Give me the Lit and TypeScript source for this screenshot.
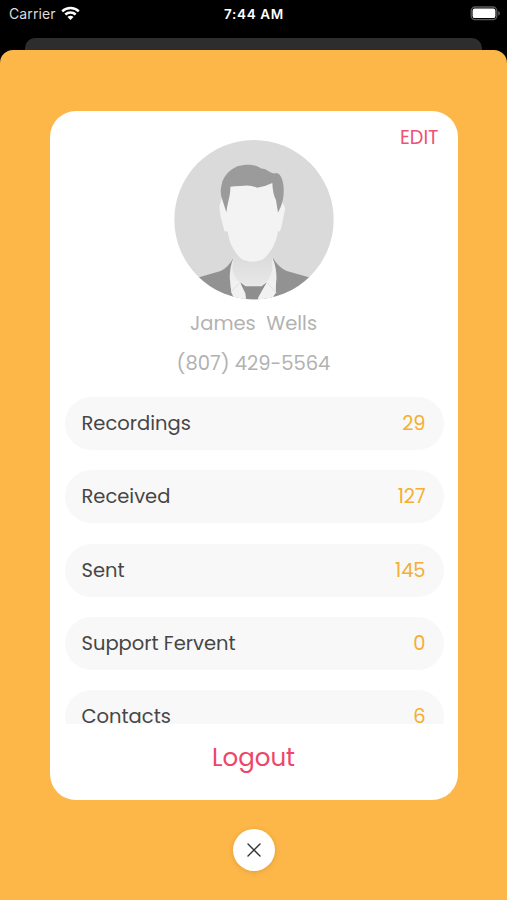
import { LitElement, html, css } from "lit";
import { customElement, property } from "lit/decorators.js";

const FONT = css`"Poppins", "Inter", "Liberation Sans", sans-serif`;

@customElement("status-bar")
class StatusBar extends LitElement {
  static styles = css`
    :host {
      display: grid;
      grid-template-columns: 1fr auto 1fr;
      align-items: center;
      height: 27px;
      padding: 0 6px 0 9px;
      box-sizing: border-box;
      color: #fff;
      font-family: "Inter", sans-serif;
      font-size: 14px;
    }
    .left { display: flex; align-items: center; gap: 5px; color: #dcdcdc; }
    .carrier { letter-spacing: 0.12px; }
    .time { font-weight: 600; font-size: 13.5px; letter-spacing: 0.65px; margin-right: 2px; }
    .battery { justify-self: end; display: block; }
    svg { display: block; }
  `;
  render() {
    return html`
      <div class="left">
        <span class="carrier">Carrier</span>
        <svg width="19" height="15" viewBox="0 0 19 15" fill="none" stroke="#fff" stroke-width="2.5">
          <path d="M1.2 5.3C5.8 .9 13.2 .9 17.8 5.3" />
          <path d="M4.3 8.5C7.2 5.8 11.8 5.8 14.7 8.5" />
          <path d="M9.5 14L6.5 11C8.2 9.4 10.8 9.4 12.5 11Z" fill="#fff" stroke="none" />
        </svg>
      </div>
      <div class="time">7:44 AM</div>
      <svg class="battery" width="31" height="15" viewBox="0 0 31 15">
        <rect x="1.2" y="1" width="25.6" height="12.6" rx="3.8" fill="#000" stroke="#5c5c5c" stroke-width="1.3" />
        <rect x="2.6" y="2.5" width="22.8" height="9.6" rx="2.2" fill="#fff" />
        <path d="M28.3 5v4.600c2-.8 2-3.800 0-4.600z" fill="#6a6a6a" />
      </svg>
    `;
  }
}

@customElement("user-avatar")
class UserAvatar extends LitElement {
  static styles = css`
    :host { display: block; width: 160px; height: 160px; }
    svg { display: block; }
  `;
  render() {
    return html`
      <svg width="160" height="160" viewBox="30 30 480 480">
        <defs>
          <clipPath id="disc"><circle cx="270" cy="269" r="239" /></clipPath>
          <linearGradient id="neck" x1="0" y1="0" x2="0" y2="1">
            <stop offset="0" stop-color="#dadada" />
            <stop offset="1" stop-color="#e8e8e8" />
          </linearGradient>
        </defs>
        <g clip-path="url(#disc)">
          <rect x="30" y="28" width="480" height="482" fill="#dadada" />
          <path d="M100 443L170 423Q193 412 208 384L327 384Q343 412 368 423L440 443V515H100Z" fill="#929292" />
          <path d="M208 384L326 384Q348 440 328 500L320 515H217L207 500Q187 440 208 384Z" fill="#eeeeee" />
          <path d="M209 372H325V420Q318 445 306 457L284 469H250L228 457Q206 440 205 415Z" fill="url(#neck)" />
          <path d="M228 457L245 469H292L309 457L283 502V512H247L244 490Z" fill="#8e8e8e" />
          <path d="M203 449L228 457L246 512H218L201 486Z" fill="#f1f1f1" />
          <path d="M334 449L309 457L283 503L284 512H318L336 488Z" fill="#f1f1f1" />
          <path d="M201 486L228 457M336 488L309 457" stroke="#dedede" stroke-width="3" fill="none" />
          <path d="M168 223Q164 232 171 264L181 302Q185 307 191 303C195 340 211 365 229 384C248 399 284 399 302 384C323 364 337 338 342 304Q349 308 352 292L362 244Q365 229 358 224L340 155H188Z" fill="#f3f3f3" />
          <path d="M187 247L176 212Q166 189 173 164C177 139 198 119 220 109C244 101 273 102 290 115Q304 115 318 126Q329 133 337 129C349 130 358 149 359 174C360 207 355 223 342 248L336 210Q326 192 325 159Q301 171 279 173Q258 163 230 168Q210 169 199 170C200 195 192 211 187 247Z" fill="#9b9b9b" />
        </g>
      </svg>
    `;
  }
}

@customElement("stat-row")
class StatRow extends LitElement {
  @property() label = "";
  @property() value = "";
  static styles = css`
    :host {
      flex: none;
      display: flex;
      align-items: center;
      justify-content: space-between;
      box-sizing: border-box;
      height: 53px;
      padding: 1px 18px 0 17px;
      border-radius: 27px;
      background: #f8f8f8;
      font: 400 19.5px/30px ${FONT};
    }
    .label { color: #464646; }
    .value { color: #f5ae31; letter-spacing: -0.1px; }
  `;
  render() {
    return html`
      <span class="label">${this.label}</span>
      <span class="value">${this.value}</span>
    `;
  }
}

@customElement("app-root")
class AppRoot extends LitElement {
  static styles = css`
    :host {
      display: flex;
      flex-direction: column;
      height: 900px;
      background: #000;
      overflow: hidden;
      font-family: ${FONT};
    }
    .behind {
      flex: none;
      height: 12px;
      margin: 11px 25px 0;
      border-radius: 10px 10px 0 0;
      background: #2d2d2d;
    }
    .sheet {
      flex: 1;
      display: flex;
      flex-direction: column;
      align-items: center;
      box-sizing: border-box;
      padding-top: 61px;
      border-radius: 13px 13px 0 0;
      background: #fcb748;
    }
    .card {
      display: flex;
      flex-direction: column;
      box-sizing: border-box;
      width: 408px;
      height: 689px;
      border-radius: 26px;
      background: #fff;
    }
    .edit {
      align-self: flex-end;
      height: 29px;
      margin-right: 19px;
      padding-top: 12px;
      box-sizing: border-box;
      font-size: 19.2px;
      line-height: 30px;
      color: #ee5275;
    }
    .avatar { align-self: center; }
    .name, .phone {
      text-align: center;
      font-size: 19.5px;
      line-height: 30px;
      color: #b2b2b2;
      white-space: pre;
    }
    .name { margin-top: 9px; }
    .phone { margin-top: 10px; }
    .list {
      display: flex;
      flex-direction: column;
      gap: 20.3px;
      height: 327px;
      margin: 18px 14px 0 15px;
      overflow: hidden;
    }
    .logout {
      margin-top: 15px;
      text-align: center;
      font-size: 24.5px;
      line-height: 38px;
      color: #ee4669;
    }
    .close {
      display: grid;
      place-items: center;
      width: 42px;
      height: 42px;
      margin-top: 29px;
      border-radius: 50%;
      background: #fff;
      box-shadow: 0 1px 5px rgba(120, 70, 0, 0.2);
    }
  `;
  private rows = [
    { label: "Recordings", value: "29" },
    { label: "Received", value: "127" },
    { label: "Sent", value: "145" },
    { label: "Support Fervent", value: "0" },
    { label: "Contacts", value: "6" },
  ];
  render() {
    return html`
      <status-bar></status-bar>
      <div class="behind"></div>
      <main class="sheet">
        <section class="card">
          <div class="edit">EDIT</div>
          <user-avatar class="avatar"></user-avatar>
          <div class="name">James  Wells</div>
          <div class="phone">(807) 429-5564</div>
          <div class="list">
            ${this.rows.map((r) => html`<stat-row .label=${r.label} .value=${r.value}></stat-row>`)}
          </div>
          <div class="logout">Logout</div>
        </section>
        <div class="close">
          <svg width="14" height="14" viewBox="0 0 14 14" stroke="#333" stroke-width="1.4" stroke-linecap="round">
            <path d="M1 1L13 13M13 1L1 13" />
          </svg>
        </div>
      </main>
    `;
  }
}
